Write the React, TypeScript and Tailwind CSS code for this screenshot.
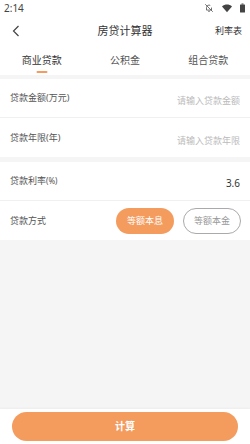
import React from "react";

const orange = "bg-[#f49b5e]";

function Row({ label, right, divider }: { label: React.ReactNode; right: React.ReactNode; divider?: boolean }) {
  return (
    <div className={`flex h-[39px] items-center justify-between bg-white px-[10px] ${divider ? "border-b border-[#f0f0f0]" : ""}`}>
      <div className="text-[9px] text-[#555]">{label}</div>
      <div>{right}</div>
    </div>
  );
}

export default function App() {
  return (
    <div
      className="flex min-h-[444px] w-[250px] flex-col bg-[#f5f5f5]"
      style={{ fontFamily: '"Noto Sans", "Noto Sans CJK SC", sans-serif' }}
    >
      {/* status bar */}
      <div className="flex h-[16px] items-center justify-between bg-white pl-[4px] pr-[5px]">
        <span className="text-[10px] leading-none text-[#444]">2:14</span>
        <div className="flex items-center gap-[8px]">
          <svg width="10" height="10" viewBox="0 0 24 24" fill="none" stroke="#555" strokeWidth="2">
            <path d="M6 17V11a6 6 0 0 1 9-5.2" />
            <path d="M18 11v6H6" />
            <path d="M10 20h4" />
            <path d="M3 3l18 18" />
          </svg>
          <svg width="10" height="9" viewBox="0 0 24 20">
            <path d="M12 19L0 5c7-6 17-6 24 0z" fill="#444" />
          </svg>
          <svg width="5" height="10" viewBox="0 0 10 18">
            <rect x="3" y="0" width="4" height="2" fill="#444" />
            <rect x="0" y="2" width="10" height="16" rx="1" fill="#444" />
          </svg>
        </div>
      </div>
      {/* header */}
      <div className="relative flex h-[30px] items-center justify-center bg-white">
        <svg className="absolute left-[12px] top-[9px]" width="8" height="12" viewBox="0 0 8 12" fill="none" stroke="#444" strokeWidth="1.2">
          <path d="M6.5 1L1.5 6l5 5" />
        </svg>
        <span className="text-[11px] text-[#333]">房贷计算器</span>
        <span className="absolute right-[8px] text-[9px] text-[#333]">利率表</span>
      </div>
      {/* tabs */}
      <div className="flex h-[29px] bg-white">
        <div className="relative flex flex-1 items-center justify-center">
          <span className="text-[10px] text-[#333]">商业贷款</span>
          <div className={`absolute bottom-[2px] left-1/2 h-[2px] w-[11px] -translate-x-1/2 rounded-full ${orange}`} />
        </div>
        <div className="flex flex-1 items-center justify-center">
          <span className="text-[10px] text-[#555]">公积金</span>
        </div>
        <div className="flex flex-1 items-center justify-center">
          <span className="text-[10px] text-[#555]">组合贷款</span>
        </div>
      </div>
      <div className="h-[4px]" />
      <Row label="贷款金额(万元)" right={<span className="text-[9px] text-[#bbb]">请输入贷款金额</span>} divider />
      <Row label="贷款年限(年)" right={<span className="text-[9px] text-[#bbb]">请输入贷款年限</span>} />
      <div className="h-[5px]" />
      <Row label={<>贷款利率<span className="text-[8px]">(%)</span></>} right={<span className="text-[10px] text-[#333]">3.6</span>} divider />
      <div className="flex h-[39px] items-center justify-between bg-white pl-[10px] pr-[9px]">
        <div className="text-[9px] text-[#555]">贷款方式</div>
        <div className="flex gap-[9px]">
          <div className={`flex h-[26px] w-[58px] items-center justify-center rounded-full ${orange} text-[9px] text-white`}>等额本息</div>
          <div className="flex h-[26px] w-[58px] items-center justify-center rounded-full border border-[#aaa] text-[9px] text-[#999]">等额本金</div>
        </div>
      </div>
      <div className="flex-1" />
      <div className="flex h-[35px] items-start bg-white px-[12px] pt-[3px] shadow-[0_-1px_2px_rgba(0,0,0,0.04)]">
        <div className={`flex h-[29px] w-full items-center justify-center rounded-full ${orange} text-[10px] font-bold text-white`}>计算</div>
      </div>
    </div>
  );
}
